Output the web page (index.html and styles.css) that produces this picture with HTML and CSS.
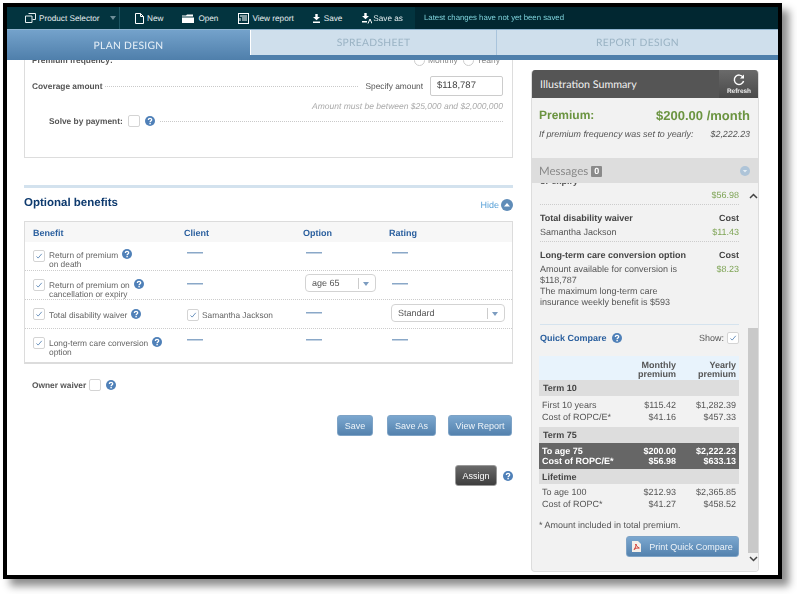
FILE: index.html
```html
<!DOCTYPE html>
<html lang="en">
<head>
<meta charset="utf-8">
<title>Plan Design</title>
<link rel="stylesheet" href="styles.css">
</head>
<body>
<svg class="defs" width="0" height="0" aria-hidden="true">
  <symbol id="help" viewBox="0 0 10 10"><circle cx="5" cy="5" r="5" fill="#4f80b8"/><path d="M3.4 3.9C3.4 2.9 4.1 2.3 5 2.3s1.7.6 1.7 1.5c0 1.3-1.6 1.3-1.6 2.5" fill="none" stroke="#fff" stroke-width="1.3"/><rect x="4.4" y="7" width="1.4" height="1.3" fill="#fff"/></symbol>
  <symbol id="check" viewBox="0 0 12 12"><path d="M3 6.5l2 2L9.3 3.4" fill="none" stroke="#6d94bf" stroke-width="1.2"/></symbol>
</svg>
<div class="frame">
  <header class="topbar">
    <div class="tools">
      <div class="tool selector">
        <svg class="ic" width="11" height="10" viewBox="0 0 11 10"><path d="M3.5.5h7v6h-3M.5 3h6.500v6.500H.5z" fill="none" stroke="#e8f0f2"/></svg>
        <span>Product Selector</span><i class="caret"></i>
      </div>
      <div class="tool t-new">
        <svg class="ic" width="9" height="11" viewBox="0 0 9 11"><path d="M.5.5h5l3 3v7h-8z" fill="none" stroke="#fff"/><path d="M5.5.5v3h3" fill="none" stroke="#fff"/></svg>
        <span>New</span>
      </div>
      <div class="tool t-open">
        <svg class="ic" width="12" height="9" viewBox="0 0 12 9"><path d="M0 1.500h4l1-1h6v2H0zM0 3.500h12V9H0z" fill="#fff"/></svg>
        <span>Open</span>
      </div>
      <div class="tool t-view">
        <svg class="ic" width="11" height="11" viewBox="0 0 11 11"><rect x=".5" y=".5" width="10" height="10" fill="none" stroke="#fff"/><path d="M2 3h7M4 5h5M4 7h5M2 5v3" stroke="#fff" fill="none"/></svg>
        <span>View report</span>
      </div>
      <div class="tool t-save">
        <svg class="ic" width="7" height="9" viewBox="0 0 7 9"><path d="M2.300 0h2.400v3H7L3.500 6.300 0 3h2.300zM0 7.600h7V9H0z" fill="#fff"/></svg>
        <span>Save</span>
      </div>
      <div class="tool t-saveas">
        <svg class="ic" width="10" height="11" viewBox="0 0 10 11"><path d="M2.300 0h2.400v3H7L3.500 6.300 0 3h2.300zM0 8h5v1.400H0z" fill="#fff"/><path d="M6 10.500L8 6l2 4.500" fill="none" stroke="#fff"/></svg>
        <span>Save as</span>
      </div>
    </div>
    <div class="status">Latest changes have not yet been saved</div>
  </header>

  <nav class="tabs">
    <div class="tab active t1">PLAN DESIGN</div>
    <div class="tab t2">SPREADSHEET</div>
    <div class="tab t3">REPORT DESIGN</div>
  </nav>

  <main class="main">
    <section class="left">
      <div class="card">
        <div class="freq">
          <span class="b">Premium frequency:</span>
          <span class="radios"><i class="radio"></i><span class="rl">Monthly</span><i class="radio"></i><span>Yearly</span></span>
        </div>
        <div class="cov">
          <span class="b">Coverage amount</span><i class="leader"></i>
          <span class="spec">Specify amount</span>
          <span class="input">$118,787</span>
        </div>
        <div class="hint">Amount must be between $25,000 and $2,000,000</div>
        <div class="solve">
          <span class="b">Solve by payment:</span>
          <span class="cb"></span>
          <svg class="help"><use href="#help"/></svg>
          <i class="leader"></i>
        </div>
      </div>

      <div class="divider"></div>
      <div class="opt-head">
        <h2>Optional benefits</h2>
        <span class="hide">Hide <svg width="12" height="12" viewBox="0 0 12 12"><circle cx="6" cy="6" r="6" fill="#5f8cb8"/><path d="M3 7.500L6 4l3 3.500z" fill="#fff"/></svg></span>
      </div>

      <div class="benefits">
        <div class="brow bhead"><span>Benefit</span><span>Client</span><span>Option</span><span>Rating</span></div>
        <div class="brow r1">
          <div class="ben"><span class="cb"><svg><use href="#check"/></svg></span><span class="bt">Return of premium<svg class="help"><use href="#help"/></svg><br>on death</span></div>
          <i class="dash"></i><i class="dash"></i><i class="dash"></i>
        </div>
        <div class="brow r2">
          <div class="ben"><span class="cb"><svg><use href="#check"/></svg></span><span class="bt">Return of premium on<svg class="help"><use href="#help"/></svg><br>cancellation or expiry</span></div>
          <i class="dash"></i>
          <div class="sel s-age"><span>age 65</span><b></b></div>
          <i class="dash"></i>
        </div>
        <div class="brow r3">
          <div class="ben"><span class="cb"><svg><use href="#check"/></svg></span><span class="bt">Total disability waiver<svg class="help"><use href="#help"/></svg></span></div>
          <div class="client"><span class="cb"><svg><use href="#check"/></svg></span>Samantha Jackson</div>
          <i class="dash"></i>
          <div class="sel s-std"><span>Standard</span><b></b></div>
        </div>
        <div class="brow r4">
          <div class="ben"><span class="cb"><svg><use href="#check"/></svg></span><span class="bt">Long-term care conversion<svg class="help"><use href="#help"/></svg><br>option</span></div>
          <i class="dash"></i><i class="dash"></i><i class="dash"></i>
        </div>
      </div>

      <div class="owner"><span class="b">Owner waiver</span><span class="cb"></span><svg class="help"><use href="#help"/></svg></div>

      <div class="actions">
        <button class="btn save">Save</button>
        <button class="btn saveas">Save As</button>
        <button class="btn view">View Report</button>
      </div>
      <div class="assign">
        <button class="btn dark">Assign</button>
        <svg class="help"><use href="#help"/></svg>
      </div>
    </section>

    <aside class="summary">
      <div class="s-head">
        <span class="s-title">Illustration Summary</span>
        <div class="refresh">
          <svg width="12" height="12" viewBox="0 0 12 12"><path d="M10 3.200A4.700 4.700 0 1 0 10.600 7" fill="none" stroke="#fff" stroke-width="1.400"/><path d="M11 .5v4H7z" fill="#fff"/></svg>
          <span>Refresh</span>
        </div>
      </div>
      <div class="prem">
        <div class="prem-main"><span>Premium:</span><span class="amt">$200.00 /month</span></div>
        <div class="prem-sub"><span>If premium frequency was set to yearly:</span><span>$2,222.23</span></div>
      </div>
      <div class="msgs">
        <span class="m-t">Messages</span><span class="badge">0</span>
        <svg class="m-ic" width="10" height="10" viewBox="0 0 10 10"><circle cx="5" cy="5" r="5" fill="#aec4d8"/><path d="M2.800 4h4.400L5 6.400z" fill="#e4edf4"/></svg>
      </div>
      <div class="scroller">
        <div class="content">
          <div class="clip-line">or expiry</div>
          <div class="lr cost-only"><span></span><span class="g">$56.98</span></div>
          <div class="block dot">
            <div class="lr hd"><span>Total disability waiver</span><span>Cost</span></div>
            <div class="lr"><span>Samantha Jackson</span><span class="g">$11.43</span></div>
          </div>
          <div class="block dot">
            <div class="lr hd"><span>Long-term care conversion option</span><span>Cost</span></div>
            <div class="lr para"><span>Amount available for conversion is $118,787<br>The maximum long-term care insurance weekly benefit is $593</span><span class="g">$8.23</span></div>
          </div>
          <div class="qc-head">
            <span class="qc-t">Quick Compare</span><svg class="help"><use href="#help"/></svg>
            <span class="show">Show:</span><span class="cb"><svg><use href="#check"/></svg></span>
          </div>
          <div class="qc">
            <div class="q qh"><span></span><span>Monthly<br>premium</span><span>Yearly<br>premium</span></div>
            <div class="qs">Term 10</div>
            <div class="qgroup">
              <div class="q"><span>First 10 years</span><span>$115.42</span><span>$1,282.39</span></div>
              <div class="q"><span>Cost of ROPC/E*</span><span>$41.16</span><span>$457.33</span></div>
            </div>
            <div class="qs">Term 75</div>
            <div class="qdark">
              <div class="q"><span>To age 75</span><span>$200.00</span><span>$2,222.23</span></div>
              <div class="q"><span>Cost of ROPC/E*</span><span>$56.98</span><span>$633.13</span></div>
            </div>
            <div class="qs life">Lifetime</div>
            <div class="qgroup last">
              <div class="q"><span>To age 100</span><span>$212.93</span><span>$2,365.85</span></div>
              <div class="q"><span>Cost of ROPC*</span><span>$41.27</span><span>$458.52</span></div>
            </div>
          </div>
          <div class="foot">* Amount included in total premium.</div>
          <div class="print-row">
            <button class="btn print">
              <svg width="9" height="11" viewBox="0 0 9 11"><path d="M0 0h6l3 3v8H0z" fill="#f4efe9"/><path d="M2 8.500C3.500 7 4.200 4.500 3.800 3c1 2.500 2 3.500 3.500 4-2-.2-3.500.3-5.300 1.500z" fill="none" stroke="#d0342c"/></svg>
              Print Quick Compare
            </button>
          </div>
        </div>
        <div class="scrollbar">
          <svg width="9" height="6" viewBox="0 0 9 6"><path d="M1 5l3.500-3.500L8 5" fill="none" stroke="#444" stroke-width="1.500"/></svg>
          <div class="track"><div class="thumb"></div></div>
          <svg width="9" height="6" viewBox="0 0 9 6"><path d="M1 1l3.500 3.500L8 1" fill="none" stroke="#444" stroke-width="1.500"/></svg>
        </div>
      </div>
    </aside>
  </main>
</div>
</body>
</html>
```
FILE: styles.css
```css
* { box-sizing: border-box; }
html, body { margin: 0; padding: 0; height: 100%; overflow: hidden; background: #fff; }
body { padding: 3px 0 0 3px; font-family: "Liberation Sans", Arial, sans-serif; font-size: 8.350px; color: #555; text-rendering: geometricPrecision; }
.defs { display: block; height: 0; }
.frame { width: 779px; height: 576px; border: 4px solid #000; background: #fff; box-shadow: 7px 7px 8px rgba(0,0,0,.45); overflow: hidden; filter: blur(.3px); }

.topbar { height: 22px; display: flex; background: #03343f; color: #e6eef0; }
.tools { width: 408px; display: flex; align-items: center; }
.tool { display: flex; align-items: center; gap: 3px; font-size: 8.200px; white-space: nowrap; }
.selector { margin-left: 18px; width: 94px; height: 22px; border-right: 1px solid #1c5562; box-sizing: content-box; }
.caret { width: 0; height: 0; margin-left: 7px; border: 3px solid transparent; border-top: 4px solid #6f8e98; border-bottom: 0; }
.t-new { margin-left: 15px; }
.t-open { margin-left: 19px; gap: 4px; }
.t-view { margin-left: 20px; }
.t-save { margin-left: 19px; gap: 4px; }
.t-saveas { margin-left: 20px; gap: 1px; }
.status { flex: 1; background: #012731; color: #7fd3dc; font-size: 7.800px; padding-left: 9px; line-height: 21px; }

.tabs { height: 31px; display: flex; background: #4f7fab; padding-bottom: 5px; border-top: 1px solid #8fb3cf; align-items: stretch; font-family: Lato, sans-serif; font-size: 10.300px; letter-spacing: .3px; }
.tab { display: flex; align-items: center; justify-content: center; background: #cfdfec; color: #9ab3c4; padding-top: 1px; }
.t1 { width: 243px; margin-bottom: -5px; background: linear-gradient(#74a2cb, #4f7fab); color: #e8f1f8; }
.t2 { width: 247px; border-left: 1px solid #fff; border-right: 1px solid #a9c4dc; }
.t3 { flex: 1; }

.main { display: flex; height: 515px; }
.left { width: 506px; padding-left: 17px; flex: none; }
.b { font-weight: bold; color: #555; }
.cb { display: inline-block; width: 12px; height: 12px; border: 1px solid #d4d4d4; border-radius: 2px; background: #fff; flex: none; }
.cb svg { display: block; width: 10px; height: 10px; }
.help { width: 10px; height: 10px; flex: none; }
.leader { flex: 1; border-top: 1px dotted #c9c9c9; }

.card { height: 98px; border: 1px solid #ddd; border-top: 0; padding-right: 9px; overflow: hidden; }
.freq { height: 12px; margin-top: -6px; padding-left: 7px; display: flex; align-items: center; justify-content: space-between; line-height: 12px; }
.radios { display: flex; align-items: center; color: #888; font-size: 8.500px; margin-right: 3px; }
.radio { width: 11px; height: 11px; border: 1px solid #ccc; border-radius: 50%; margin-right: 3px; }
.rl { margin-right: 5px; }
.cov { height: 20px; margin-top: 10px; padding-left: 7px; display: flex; align-items: center; gap: 3px; }
.spec { margin-left: 4px; margin-right: 4px; }
.input { width: 73px; height: 20px; border: 1px solid #ccc; border-radius: 2px; padding-left: 6px; line-height: 18px; font-size: 9.500px; color: #444; }
.hint { height: 12px; margin-top: 4px; text-align: right; font-style: italic; color: #aaa; font-size: 8.500px; line-height: 12px; }
.solve { height: 16px; margin-top: 1px; padding-left: 24px; display: flex; align-items: center; gap: 5px; }

.divider { height: 3px; margin-top: 27px; background: #d3e2ee; }
.opt-head { height: 33px; display: flex; justify-content: space-between; align-items: flex-start; }
.opt-head h2 { margin: 8px 0 0; font-size: 11.500px; line-height: 14px; color: #0e3a6e; font-weight: bold; }
.hide { display: flex; align-items: center; gap: 2px; margin-top: 11px; color: #5aa2d8; font-size: 9px; }

.benefits { border: 1px solid #dcdcdc; border-bottom-width: 2px; height: 143px; }
.brow { display: grid; grid-template-columns: 151px 119px 86px 1fr; padding-left: 8px; align-items: start; border-bottom: 1px dotted #ccc; }
.bhead { height: 20px; padding-top: 1px; background: #f7f7f7; align-items: center; font-size: 9px; font-weight: bold; color: #2a5f9e; border: 0; }
.r1, .r2, .r3 { height: 29px; }
.r4 { height: 33px; border: 0; }
.ben { display: flex; gap: 4px; padding-top: 8px; }
.bt { line-height: 8.500px; color: #666; }
.r1 .bt { margin-top: -1px; }
.r3 .bt { margin-top: 1px; }
.bt .help { vertical-align: -1px; margin-left: 4px; }
.dash { display: block; width: 16px; height: 1px; margin: 10px 0 0 3px; background: #8aa8c8; box-shadow: 0 1px 0 rgba(138,168,200,.5); }
.r2 .dash, .r3 .dash { margin-top: 12px; }
.client { display: flex; align-items: center; gap: 3px; padding: 9px 0 0 3px; color: #666; }
.sel { display: flex; align-items: center; justify-content: space-between; height: 18px; margin-top: 4px; margin-left: 2px; border: 1px solid #d3d3d3; border-radius: 4px; padding-left: 6px; color: #555; font-size: 9px; }
.sel b { width: 17px; height: 11px; border-left: 1px solid #ccc; }
.sel b::after { content: ""; display: block; width: 0; margin: 4px 0 0 4px; border: 3.500px solid transparent; border-top: 4px solid #7c9cc0; border-bottom: 0; }
.s-age { width: 71px; margin-top: 3px; }
.s-std { width: 114px; }

.owner { display: flex; align-items: center; height: 14px; margin-top: 14px; padding-left: 8px; }
.owner .cb { margin: 0 5px 0 3px; }

.actions { display: flex; justify-content: flex-end; margin-top: 23px; padding-right: 1px; }
.btn { height: 21px; padding: 0; border: 1px solid #7ea3c6; border-radius: 3px; background: linear-gradient(#7ba7cf, #5482ae); color: #eef4f9; font: 9px "Liberation Sans", Arial, sans-serif; }
.save { width: 36px; margin-right: 14px; }
.saveas { width: 49px; margin-right: 12px; }
.view { width: 64px; }
.assign { display: flex; justify-content: flex-end; align-items: center; gap: 6px; margin-top: 29px; }
.dark { width: 42px; background: linear-gradient(#6a6a6a, #3e3e3e); border-color: #999; color: #fff; }

.summary { width: 228px; height: 502px; margin: 10px 0 0 18px; background: #f2f2f2; border: 1px solid #ddd; border-top: 0; border-radius: 4px; overflow: hidden; flex: none; }
.s-head { height: 28px; margin: 0 -1px; display: flex; justify-content: space-between; background: #555; color: #f2f2f2; }
.s-title { font-family: Lato, sans-serif; font-size: 10.700px; line-height: 30px; padding-left: 9px; }
.refresh { width: 40px; background: linear-gradient(#6a6a6a, #4a4a4a); display: flex; flex-direction: column; align-items: center; padding-top: 4px; font-size: 6.500px; font-weight: bold; color: #eee; gap: 2px; line-height: 8px; }
.prem { height: 60px; padding: 10px 8px 0 7px; }
.prem-main { display: flex; justify-content: space-between; font-size: 12px; font-weight: bold; color: #6b9440; line-height: 15px; }
.amt { font-size: 13px; }
.prem-sub { display: flex; justify-content: space-between; margin-top: 6px; font-style: italic; font-size: 8.900px; color: #555; line-height: 11px; }
.msgs { height: 25px; background: #dddddd; display: flex; align-items: center; padding: 1px 8px 0 7px; }
.m-t { font-family: Lato, sans-serif; font-size: 11.500px; color: #8a8a8a; }
.badge { margin-left: 3px; width: 11px; height: 11px; background: #8a8a8a; color: #fff; font-size: 9px; font-weight: bold; text-align: center; line-height: 11px; border-radius: 1px; }
.m-ic { margin-left: auto; }

.scroller { display: flex; height: 389px; overflow: hidden; }
.content { width: 215px; padding: 0 8px; flex: none; font-size: 9px; color: #555; }
.clip-line { height: 8px; margin-top: -7px; line-height: 11px; font-weight: bold; }
.lr { display: flex; justify-content: space-between; line-height: 11px; gap: 10px; }
.g { color: #7ea455; }
.cost-only { margin-top: 6px; height: 12px; }
.block { margin-top: 2px; padding-top: 8px; border-top: 1px dotted #ccc; height: 35px; }
.block + .block { height: 83px; }
.hd { font-weight: bold; color: #444; margin-bottom: 3px; }
.para span:first-child { width: 145px; }
.qc-head { display: flex; align-items: center; height: 26px; border-top: 1px solid #d5e3ee; gap: 5px; }
.qc-t { font-weight: bold; color: #2a5f9e; }
.show { margin-left: auto; margin-right: -2px; }
.qc { margin: 6px 0 0 -1px; }
.q { display: grid; grid-template-columns: 92px 42px 60px; padding-left: 3px; line-height: 12px; height: 12px; }
.q span + span { text-align: right; }
.qh { height: 24px; background: #e8f3fc; padding-top: 5px; line-height: 9px; font-weight: bold; color: #555; }
.qs { height: 16px; background: #dddddd; padding-left: 4px; line-height: 16px; font-weight: bold; color: #444; }
.qs.life { height: 15px; padding-left: 3px; }
.qgroup { padding: 3px 0 5px; height: 31px; }
.qgroup.last { padding-top: 2px; }
.qdark { background: #666; color: #fff; font-weight: bold; height: 26px; padding-top: 3px; }
.qdark .q { line-height: 10px; height: 10px; }
.foot { margin: 5px 0 0 -1px; line-height: 11px; }
.print-row { display: flex; justify-content: flex-end; margin-top: 5px; }
.print { width: 113px; height: 21px; display: flex; align-items: center; justify-content: center; gap: 8px; }
.scrollbar { width: 11px; margin-left: 1px; display: flex; flex-direction: column; align-items: center; padding: 10px 0 10px; background: #f2f2f2; }
.track { flex: 1; width: 11px; padding-top: 126px; margin: 3px 0; }
.thumb { height: 100%; background: #c9c9c9; }
```
